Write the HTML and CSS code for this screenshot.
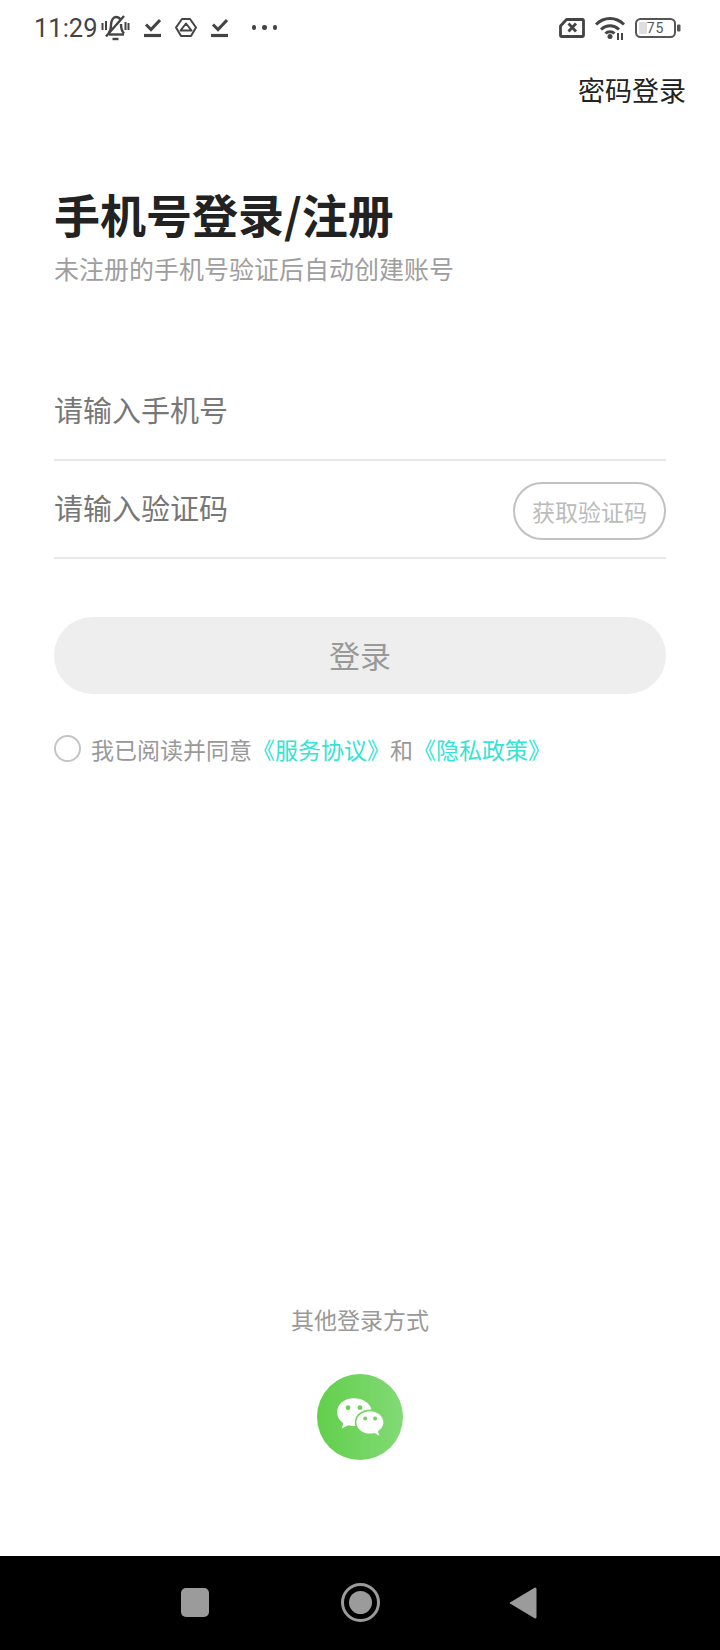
FILE: index.html
```html
<!DOCTYPE html>
<html lang="zh-CN">
<head>
    <meta charset="UTF-8">
    <meta name="viewport" content="width=device-width, initial-scale=1.0">
    <title>手机号登录</title>
    <link rel="stylesheet" href="styles.css">
</head>
<body>
    <div class="screen">
        <div class="status-bar">
            <span class="clock">11:29</span>
            <svg class="ic-bell" width="29" height="26" viewBox="0 0 29 26" fill="none" stroke="#444" stroke-width="2.400">
                <path d="M7.500 18c2-2 2.500-4 2.500-8 0-4 2-8 5-8 2 0 3.500 1 4.500 2.500" />
                <path d="M20 9c0 4 .5 7 3 9.500" />
                <path d="M8 19.500h15" />
                <path d="M5 21.500L23 1" />
                <path d="M11.500 24h6" />
                <path d="M1.500 8v7M5 6v9M24.500 7v8M27.500 8v7" stroke-width="2" />
            </svg>
            <svg class="ic-check" width="17" height="20" viewBox="0 0 17 20" fill="none" stroke="#444">
                <path d="M2 6.500l5 5 9-9.500" stroke-width="3" />
                <path d="M0 17.500h17" stroke-width="3.200" />
            </svg>
            <svg class="ic-drive" width="22" height="19" viewBox="0 0 22 19" fill="none" stroke="#444" stroke-width="2">
                <path d="M7 1h8l6 8.500-5 8.500H6L1 9.500z" stroke-linejoin="round" />
                <path d="M11 5.500l5.500 7H5.500z" stroke-linejoin="round" />
            </svg>
            <svg class="ic-check" width="17" height="20" viewBox="0 0 17 20" fill="none" stroke="#444">
                <path d="M2 6.500l5 5 9-9.500" stroke-width="3" />
                <path d="M0 17.500h17" stroke-width="3.200" />
            </svg>
            <div class="dots"><i></i><i></i><i></i></div>
            <div class="status-right">
                <svg class="ic-sim" width="26" height="20" viewBox="0 0 26 20" fill="none" stroke="#444">
                    <path d="M7.500 1.500h16a1 1 0 0 1 1 1v15a1 1 0 0 1-1 1h-21a1 1 0 0 1-1-1V8z" stroke-width="2.800" stroke-linejoin="round" />
                    <path d="M9.500 5.500l7.500 8M17 5.500l-7.500 8" stroke-width="2.800" />
                </svg>
                <svg class="ic-wifi" width="30" height="24" viewBox="0 0 30 24" fill="none" stroke="#444" stroke-width="3">
                    <path d="M1 8.500c8-8 20-8 28 0" />
                    <path d="M6 13.500c5.500-5 12.500-5 18 0" />
                    <path d="M10.500 17.500c2.500-2.500 6.500-2.500 9 0" />
                    <circle cx="15" cy="20.500" r="2.500" fill="#444" stroke="none" />
                    <path d="M23 17v7M27 17v7" stroke-width="2" />
                </svg>
                <svg class="ic-battery" width="46" height="20" viewBox="0 0 46 20" fill="none">
                    <rect x="1" y="1" width="39" height="18" rx="4.500" stroke="#555" stroke-width="2" />
                    <rect x="4" y="4" width="8" height="12" rx="1" fill="#dedede" />
                    <rect x="42" y="6.500" width="3.500" height="7" rx="1" fill="#555" />
                    <text x="20.500" y="15" text-anchor="middle" class="battery-num">75</text>
                </svg>
            </div>
        </div>

        <div class="top-link">密码登录</div>

        <main class="login">
            <h1 class="login-title">手机号登录/注册</h1>
            <p class="login-sub">未注册的手机号验证后自动创建账号</p>

            <div class="field field-phone">
                <span class="field-text">请输入手机号</span>
            </div>
            <div class="field field-code">
                <span class="field-text">请输入验证码</span>
                <span class="code-btn">获取验证码</span>
            </div>

            <div class="submit">登录</div>

            <div class="agree">
                <span class="agree-check"></span>
                <span class="agree-text">我已阅读并同意<a>《服务协议》</a>和<a>《隐私政策》</a></span>
            </div>
        </main>

        <div class="other">
            <div class="other-label">其他登录方式</div>
            <div class="wechat">
                <svg width="52" height="42" viewBox="0 0 50 40" fill="#fff">
                    <path d="M19 2C9.600 2 3 8 3 15.500c0 4.500 2.500 8 6 10.500l-1.500 5 6-3c1.800.5 3.500.7 5.500.7.500 0 1 0 1.500-.1-.4-1.300-.5-2.400-.5-3.600 0-7 6.500-12.300 14.700-12.300.5 0 .8 0 1.300.1C34.500 6.500 27.500 2 19 2z" />
                    <path d="M34.500 14.500c-7.300 0-13 4.800-13 10.700s5.700 10.700 13 10.700c1.500 0 3-.2 4.300-.6l4.700 2.700-1.200-4.500c3-2 5.200-4.800 5.200-8.300 0-5.900-5.700-10.700-13-10.700z" />
                    <circle cx="13.500" cy="11" r="2.300" fill="#6bd258" />
                    <circle cx="25" cy="11" r="2.300" fill="#6bd258" />
                    <circle cx="30" cy="21.500" r="1.900" fill="#72d45f" />
                    <circle cx="39.500" cy="21.500" r="1.900" fill="#72d45f" />
                </svg>
            </div>
        </div>

        <div class="nav-bar">
            <span class="nav-square"></span>
            <span class="nav-home"><i></i></span>
            <svg class="nav-back" width="28" height="32" viewBox="0 0 28 32" fill="#9b9b9b">
                <path d="M26 0.500a1.500 1.500 0 0 1 1.500 1.500v28a1.500 1.500 0 0 1-1.500 1.500L1 16.500a.6.6 0 0 1 0-1z" />
            </svg>
        </div>
    </div>
</body>
</html>
```

FILE: styles.css
```css
* {
    box-sizing: border-box;
}

html,
body {
    margin: 0;
    padding: 0;
}

body {
    background: #fff;
    font-family: "Noto Sans CJK SC", "Noto Sans", sans-serif;
    color: #222;
}

.screen {
    width: 720px;
    height: 1650px;
    display: flex;
    flex-direction: column;
}

/* status bar */
.status-bar {
    height: 55px;
    flex: none;
    display: flex;
    align-items: center;
    padding-left: 34px;
    padding-right: 39px;
}

.clock {
    font-family: Roboto, sans-serif;
    font-size: 25.500px;
    color: #444;
}

.ic-bell {
    margin-left: 3px;
}

.ic-check {
    margin-left: 14px;
}

.ic-drive {
    margin-left: 14px;
}

.dots {
    display: flex;
    gap: 6px;
    margin-left: 24px;
}

.dots i {
    width: 4.500px;
    height: 4.500px;
    border-radius: 50%;
    background: #444;
}

.status-right {
    margin-left: auto;
    display: flex;
    align-items: center;
    gap: 10px;
}

.battery-num {
    font-family: Roboto, sans-serif;
    font-size: 14px;
    letter-spacing: 1px;
    fill: #555;
}

/* password login link */
.top-link {
    flex: none;
    align-self: flex-end;
    margin-right: 34px;
    font-size: 27px;
    line-height: 40px;
    margin-top: 15px;
    color: #222;
}

/* login form */
.login {
    flex: 1;
    padding: 0 54px;
}

.login-title {
    margin: 72px 0 0;
    font-size: 46px;
    line-height: 62px;
    font-weight: 700;
    color: #222;
}

.login-sub {
    margin: 6px 0 0;
    font-size: 25px;
    line-height: 36px;
    color: #9e9e9e;
}

.field {
    height: 98px;
    display: flex;
    align-items: center;
    justify-content: space-between;
    padding-bottom: 4px;
    border-bottom: 2px solid #e8e8e8;
}

.field-phone {
    margin-top: 77px;
}

.field-text {
    font-size: 29px;
    color: #777;
}

.code-btn {
    width: 153px;
    height: 58px;
    margin-top: 8px;
    display: flex;
    align-items: center;
    justify-content: center;
    border: 2px solid #c2c2c2;
    border-radius: 29px;
    font-size: 23px;
    color: #bbb;
}

.submit {
    margin-top: 58px;
    height: 77px;
    padding-bottom: 3px;
    border-radius: 39px;
    background: #eee;
    display: flex;
    align-items: center;
    justify-content: center;
    font-size: 31px;
    color: #999;
}

.agree {
    margin-top: 36px;
    display: flex;
    align-items: center;
}

.agree-check {
    width: 27px;
    height: 27px;
    border: 2px solid #c4c4c4;
    border-radius: 50%;
    margin-right: 10px;
}

.agree-text {
    font-size: 23px;
    line-height: 34px;
    padding-top: 2px;
    color: #999;
}

.agree-text a {
    color: #33e4d4;
}

/* other login methods */
.other {
    flex: none;
    display: flex;
    flex-direction: column;
    align-items: center;
    padding-bottom: 96px;
}

.other-label {
    font-size: 23px;
    line-height: 34px;
    color: #999;
}

.wechat {
    margin-top: 38px;
    width: 86px;
    height: 86px;
    border-radius: 50%;
    background: linear-gradient(to right, #62cf4c, #82da75);
    display: flex;
    align-items: center;
    justify-content: center;
}

/* android navigation bar */
.nav-bar {
    flex: none;
    height: 94px;
    background: #000;
    display: flex;
    align-items: center;
    justify-content: center;
    gap: 130px;
    padding-bottom: 1px;
    padding-right: 3px;
}

.nav-square {
    width: 28px;
    height: 29px;
    margin-right: 2px;
    border-radius: 5px;
    background: #9b9b9b;
}

.nav-home {
    width: 39px;
    height: 39px;
    border: 3px solid #9b9b9b;
    border-radius: 50%;
    display: flex;
    align-items: center;
    justify-content: center;
}

.nav-home i {
    width: 23px;
    height: 23px;
    border-radius: 50%;
    background: #9b9b9b;
}

.nav-back {
    margin-left: -1px;
}
```
